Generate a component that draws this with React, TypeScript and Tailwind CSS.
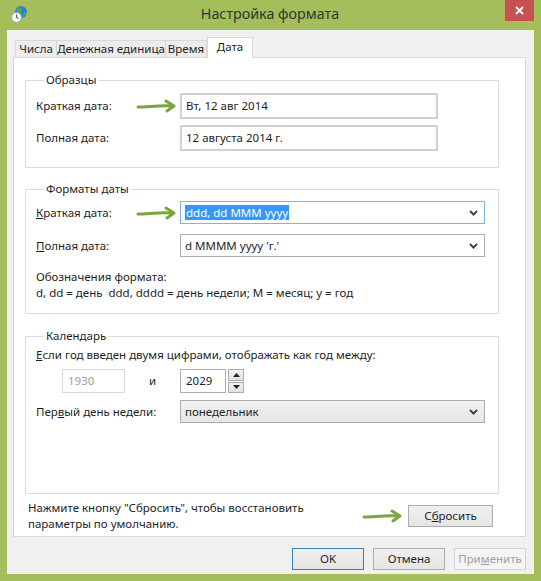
const green = "#7ba53d";

function Arrow() {
  return (
    <svg width="42" height="14" viewBox="0 0 42 14" className="block">
      <path d="M2 8 C 12 8, 24 6, 37 7" stroke={green} strokeWidth="3" fill="none" strokeLinecap="round" />
      <path d="M30 2 L38 7 L31 12" stroke={green} strokeWidth="3" fill="none" strokeLinecap="round" strokeLinejoin="round" />
    </svg>
  );
}

function Chevron() {
  return (
    <svg width="9" height="6" viewBox="0 0 9 6" className="block">
      <path d="M1 1 L4.5 4.5 L8 1" stroke="#444" strokeWidth="2" fill="none" />
    </svg>
  );
}

function AppIcon() {
  return (
    <svg width="16" height="18" viewBox="0 0 16 18" className="block">
      <circle cx="10" cy="7" r="6" fill="#2f7fd6" />
      <path d="M6 3 Q9 2 11 4 Q9 6 10 8 Q7 9 6 6 Z" fill="#4caf3a" />
      <path d="M12 9 Q14 8 15 6 Q15 10 12 11 Z" fill="#4caf3a" />
      <circle cx="5.5" cy="12.5" r="5" fill="#f4f4f4" stroke="#9aa3ad" strokeWidth="1" />
      <path d="M5.5 9.5 L5.5 12.5 L7.5 13.5" stroke="#555" strokeWidth="1" fill="none" />
    </svg>
  );
}

function Legend({ children }: { children: React.ReactNode }) {
  return <legend className="ml-[8px] px-[2px] text-[11.5px] leading-[16px] text-[#1e1e1e]">{children}</legend>;
}

function Combo({ children, active = false, gray = false }: { children: React.ReactNode; active?: boolean; gray?: boolean }) {
  return (
    <div
      className={
        "flex items-center w-[305px] h-[23px] border pl-[4px] pr-[6px] " +
        (active
          ? "border-[#7eb4ea] bg-white"
          : gray
          ? "border-[#acacac] bg-gradient-to-b from-[#f2f2f2] to-[#e5e5e5]"
          : "border-[#acacac] bg-white")
      }
    >
      <div className="flex-1 text-[11.5px] leading-[16px] text-[#1e1e1e]">{children}</div>
      <Chevron />
    </div>
  );
}

function Button({ children, primary = false, disabled = false }: { children: React.ReactNode; primary?: boolean; disabled?: boolean }) {
  return (
    <div
      className={
        "flex items-center justify-center h-[22px] text-[11.5px] leading-[16px] border " +
        (disabled
          ? "border-[#d5d5d5] bg-[#f4f4f4] text-[#a0a0a0]"
          : primary
          ? "border-[#3c7fb1] bg-gradient-to-b from-[#f0f0f0] to-[#e5e5e5] text-[#1e1e1e]"
          : "border-[#adadad] bg-gradient-to-b from-[#f0f0f0] to-[#e5e5e5] text-[#1e1e1e]")
      }
    >
      {children}
    </div>
  );
}

export default function App() {
  return (
    <div className="w-[541px] h-[581px] bg-[#a3be5a] flex flex-col font-['Noto_Sans','DejaVu_Sans',sans-serif] text-[#1e1e1e] overflow-hidden">
      {/* title bar */}
      <div className="h-[30px] flex items-start shrink-0">
        <div className="w-[35px] pl-[11px] pt-[5px]">
          <AppIcon />
        </div>
        <div className="flex-1 text-center pt-[4px] text-[14.3px] leading-[20px] text-[#333]">Настройка формата</div>
        <div className="w-[29px] h-[21px] mr-[7px] bg-[#c75050] flex items-center justify-center">
          <svg width="9" height="9" viewBox="0 0 9 9">
            <path d="M1 1 L8 8 M8 1 L1 8" stroke="white" strokeWidth="1.8" />
          </svg>
        </div>
      </div>

      {/* client area */}
      <div className="mx-[7px] h-[544px] bg-[#f0f0f0] px-[6px] flex flex-col">
        {/* tabs */}
        <div className="flex items-end h-[20px] mt-[7px] pl-[2px] whitespace-nowrap">
          <div className="w-[42px] h-[17px] border border-b-0 border-[#d9d9d9] bg-[#ececec] text-[11.5px] leading-[16px] text-center">Числа</div>
          <div className="w-[109px] h-[17px] border border-b-0 border-l-0 border-[#d9d9d9] bg-[#ececec] text-[11.5px] leading-[16px] text-center">Денежная единица</div>
          <div className="w-[41px] h-[17px] border border-b-0 border-l-0 border-[#d9d9d9] bg-[#ececec] text-[11.5px] leading-[16px] text-center">Время</div>
          <div className="w-[46px] h-[21px] -mb-px relative border border-b-0 border-[#d9d9d9] bg-white text-[11.5px] leading-[18px] text-center">Дата</div>
        </div>

        {/* panel */}
        <div className="w-[513px] h-[480px] bg-white border border-[#d9d9d9] pt-[14px] pl-[11px] flex flex-col">
          {/* Образцы */}
          <fieldset className="w-[474px] border border-[#dcdcdc] px-[10px] pt-[5px] pb-[16px]">
            <Legend>Образцы</Legend>
            <div className="flex flex-col gap-[6px]">
              <div className="flex items-center">
                <div className="w-[144px] flex items-center text-[11.5px] leading-[16px]">
                  <span className="w-[100px]">Краткая дата:</span>
                  <Arrow />
                </div>
                <div className="w-[258px] h-[26px] border-2 border-[#d2d2d2] flex items-center pl-[4px] text-[11.5px] leading-[16px]">Вт, 12 авг 2014</div>
              </div>
              <div className="flex items-center">
                <div className="w-[144px] text-[11.5px] leading-[16px]">Полная дата:</div>
                <div className="w-[258px] h-[26px] border-2 border-[#d2d2d2] flex items-center pl-[4px] text-[11.5px] leading-[16px]">12 августа 2014 г.</div>
              </div>
            </div>
          </fieldset>

          {/* Форматы даты */}
          <fieldset className="w-[474px] mt-[13px] border border-[#dcdcdc] px-[10px] pt-[4px] pb-[12px]">
            <Legend>Форматы даты</Legend>
            <div className="flex flex-col gap-[10px]">
              <div className="flex items-center">
                <div className="w-[144px] flex items-center text-[11.5px] leading-[16px]">
                  <span className="w-[100px]"><span className="underline">К</span>раткая дата:</span>
                  <Arrow />
                </div>
                <Combo active>
                  <span className="bg-[#3399ff] text-white px-[1px]">ddd, dd MMM yyyy</span>
                </Combo>
              </div>
              <div className="flex items-center">
                <div className="w-[144px] text-[11.5px] leading-[16px]"><span className="underline">П</span>олная дата:</div>
                <Combo>d MMMM yyyy 'г.'</Combo>
              </div>
            </div>
            <div className="mt-[12px] text-[11.5px] leading-[16px]">
              <div>Обозначения формата:</div>
              <div>d, dd = день&nbsp; ddd, dddd = день недели; M = месяц; y = год</div>
            </div>
          </fieldset>

          {/* Календарь */}
          <fieldset className="w-[474px] mt-[14px] border border-[#dcdcdc] px-[10px] pt-[3px] pb-[70px]">
            <Legend>Календарь</Legend>
            <div className="text-[11.5px] leading-[16px]"><span className="underline">Е</span>сли год введен двумя цифрами, отображать как год между:</div>
            <div className="flex items-center mt-[6px]">
              <div className="ml-[26px] w-[63px] h-[24px] border border-[#d9d9d9] flex items-center pl-[5px] text-[11.5px] leading-[16px] text-[#a0a0a0]">1930</div>
              <div className="w-[55px] text-center text-[11.5px] leading-[16px]">и</div>
              <div className="w-[46px] h-[24px] border border-[#abadb3] flex items-center pl-[5px] text-[11.5px] leading-[16px]">2029</div>
              <div className="ml-[2px] w-[16px] h-[24px] flex flex-col gap-px">
                <div className="flex-1 border border-[#acacac] bg-gradient-to-b from-[#f2f2f2] to-[#e2e2e2] flex items-center justify-center">
                  <svg width="7" height="4" viewBox="0 0 7 4"><path d="M0 4 L3.5 0 L7 4 Z" fill="#222" /></svg>
                </div>
                <div className="flex-1 border border-[#acacac] bg-gradient-to-b from-[#f2f2f2] to-[#e2e2e2] flex items-center justify-center">
                  <svg width="7" height="4" viewBox="0 0 7 4"><path d="M0 0 L3.5 4 L7 0 Z" fill="#222" /></svg>
                </div>
              </div>
            </div>
            <div className="flex items-center mt-[7px]">
              <div className="w-[144px] text-[11.5px] leading-[16px]">Пер<span className="underline">в</span>ый день недели:</div>
              <Combo gray>понедельник</Combo>
            </div>
          </fieldset>

          {/* reset row */}
          <div className="w-[474px] flex items-start pl-[3px] pr-[6px]">
            <div className="flex-1 mt-[6px] text-[11.5px] leading-[16px]">
              <div>Нажмите кнопку "Сбросить", чтобы восстановить</div>
              <div>параметры по умолчанию.</div>
            </div>
            <div className="mt-[15px] mr-[4px]">
              <Arrow />
            </div>
            <div className="mt-[11px] w-[85px]">
              <Button>С<span className="underline">б</span>росить</Button>
            </div>
          </div>
        </div>

        {/* dialog buttons */}
        <div className="flex justify-end gap-[9px] mt-[11px] pr-[2px]">
          <div className="w-[72px]"><Button primary>OK</Button></div>
          <div className="w-[72px]"><Button>Отмена</Button></div>
          <div className="w-[72px]"><Button disabled>При<span className="underline">м</span>енить</Button></div>
        </div>
      </div>
    </div>
  );
}
